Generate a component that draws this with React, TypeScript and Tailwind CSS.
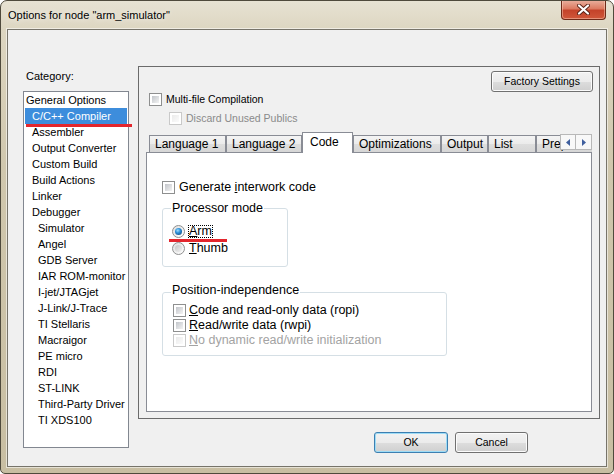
import React from "react";

function CheckBox({ disabled }: { disabled?: boolean }) {
  return (
    <span
      className={`inline-flex w-[13px] h-[13px] shrink-0 border p-[2px] bg-white ${
        disabled ? "border-[#c9c9c9]" : "border-[#8e8f8f]"
      }`}
    >
      <span
        className={`block w-full h-full ${
          disabled
            ? "bg-[linear-gradient(135deg,#ebebeb,#fbfbfb)]"
            : "bg-[linear-gradient(135deg,#c2c5ca,#f3f3f3)]"
        }`}
      />
    </span>
  );
}

function Radio({ checked }: { checked?: boolean }) {
  return (
    <span className="inline-flex items-center justify-center w-[13px] h-[13px] shrink-0 rounded-full border border-[#8e8f8f] bg-[linear-gradient(135deg,#dedede,#ffffff)]">
      {checked ? (
        <span className="w-[7px] h-[7px] rounded-full bg-[radial-gradient(circle_at_40%_35%,#9fe0ff_0%,#2b8fd8_40%,#0b3d6b_100%)]" />
      ) : (
        <span className="w-[7px] h-[7px] rounded-full bg-[linear-gradient(135deg,#c4c4c4,#f2f2f2)]" />
      )}
    </span>
  );
}

const categories: { label: string; level: number; selected?: boolean }[] = [
  { label: "General Options", level: 0 },
  { label: "C/C++ Compiler", level: 1, selected: true },
  { label: "Assembler", level: 1 },
  { label: "Output Converter", level: 1 },
  { label: "Custom Build", level: 1 },
  { label: "Build Actions", level: 1 },
  { label: "Linker", level: 1 },
  { label: "Debugger", level: 1 },
  { label: "Simulator", level: 2 },
  { label: "Angel", level: 2 },
  { label: "GDB Server", level: 2 },
  { label: "IAR ROM-monitor", level: 2 },
  { label: "I-jet/JTAGjet", level: 2 },
  { label: "J-Link/J-Trace", level: 2 },
  { label: "TI Stellaris", level: 2 },
  { label: "Macraigor", level: 2 },
  { label: "PE micro", level: 2 },
  { label: "RDI", level: 2 },
  { label: "ST-LINK", level: 2 },
  { label: "Third-Party Driver", level: 2 },
  { label: "TI XDS100", level: 2 },
];

const tabs: { label: string; w: string; selected?: boolean }[] = [
  { label: "Language 1", w: "w-[77px]" },
  { label: "Language 2", w: "w-[76px]" },
  { label: "Code", w: "w-[51px]", selected: true },
  { label: "Optimizations", w: "w-[88px]" },
  { label: "Output", w: "w-[47px]" },
  { label: "List", w: "w-[48px]" },
  { label: "Preprocessor", w: "w-[80px]" },
];

const btn =
  "h-[21px] rounded-[3px] border flex items-center justify-center text-[10.5px] text-black bg-[linear-gradient(180deg,#f2f2f2_0%,#ebebeb_50%,#dddddd_51%,#cfcfcf_100%)]";

export default function App() {
  return (
    <div className="w-[614px] h-[474px] flex flex-col rounded-t-[7px] rounded-b-[5px] border border-[#4f4a3c] overflow-hidden bg-[linear-gradient(180deg,#e7e2d3_0%,#ddd6c1_6%,#d0c7ad_35%,#c8bea2_100%)] font-['Liberation_Sans',Arial,sans-serif] text-black">
      {/* Title bar */}
      <div className="h-[28px] flex items-center justify-between pl-[7px] shrink-0">
        <span className="text-[11px] leading-[14px] [text-shadow:0_0_6px_rgba(255,255,255,0.95)]">
          Options for node "arm_simulator"
        </span>
        <div className="self-start -mt-[1px] mr-[7px] w-[45px] h-[20px] rounded-b-[4px] border border-t-0 border-[#6e2a18] bg-[linear-gradient(180deg,#eab2a0_0%,#dc7b62_45%,#c4432a_55%,#d0573a_100%)] shadow-[inset_0_0_0_1px_rgba(255,220,200,0.45)] flex items-center justify-center">
          <svg width="13" height="11" viewBox="0 0 13 11">
            <path d="M2 1.5 L11 9.5 M11 1.5 L2 9.5" stroke="#5a2417" strokeWidth="4" strokeLinecap="round" />
            <path d="M2 1.5 L11 9.5 M11 1.5 L2 9.5" stroke="#ffffff" strokeWidth="2.2" strokeLinecap="round" />
          </svg>
        </div>
      </div>

      {/* Client area */}
      <div className="ml-[6px] w-[600px] h-[438px] border border-[#77746a] bg-[#f0f0f0] flex shadow-[0_0_0_1px_rgba(255,255,255,0.55)]">
        {/* Left column */}
        <div className="w-[121px] pl-[15px] pt-[39px] flex flex-col shrink-0">
          <div className="h-[14px] leading-[14px] text-[11px] pl-[3px]">Category:</div>
          <div className="mt-[8px] w-[106px] h-[357px] border border-[#828790] bg-white relative">
            {categories.map((c) => (
              <div
                key={c.label}
                className={`h-[16px] leading-[16px] text-[11px] whitespace-nowrap ${
                  c.selected ? "mx-[1px] bg-[#3d8ddc] text-white" : ""
                } ${c.level === 0 ? "pl-[2px]" : c.level === 1 ? (c.selected ? "pl-[7px]" : "pl-[8px]") : "pl-[14px]"}`}
              >
                {c.label}
              </div>
            ))}
            <div className="absolute left-[2px] top-[32px] w-[106px] h-[3px] bg-[#e3262d]" />
          </div>
        </div>

        {/* Right column */}
        <div className="ml-[9px] w-[462px] pt-[36px] flex flex-col shrink-0">
          <div className="h-[353px] border border-[#6b6b6b] flex flex-col">
            <div
              className={`${btn} self-end mt-[4px] mr-[6px] w-[102px] border-[#707070] shadow-[inset_0_0_0_1px_#fbfbfb]`}
            >
              Factory Settings
            </div>
            <div className="mt-[1px] h-[13px] pl-[10px] flex items-center gap-[4px]">
              <CheckBox />
              <span className="text-[10.5px] leading-[13px]">Multi-file Compilation</span>
            </div>
            <div className="mt-[6px] h-[13px] pl-[30px] flex items-center gap-[4px]">
              <CheckBox disabled />
              <span className="text-[10.5px] leading-[13px] text-[#8a8a8a]">Discard Unused Publics</span>
            </div>

            {/* Tab strip */}
            <div className="mt-[7px] ml-[10px] w-[443px] h-[21px] flex items-end relative z-10 overflow-hidden">
              {tabs.map((t) =>
                t.selected ? (
                  <div
                    key={t.label}
                    className={`${t.w} h-[21px] shrink-0 border border-b-0 border-[#898c95] bg-white text-[12px] leading-[18px] pl-[7px] whitespace-nowrap`}
                  >
                    {t.label}
                  </div>
                ) : (
                  <div
                    key={t.label}
                    className={`${t.w} h-[17px] mb-[1px] shrink-0 border border-b-0 border-[#898c95] bg-[linear-gradient(180deg,#f4f4f4_0%,#ebebeb_50%,#dedede_51%,#d6d6d6_100%)] text-[12px] leading-[16px] pl-[5px] whitespace-nowrap overflow-hidden`}
                  >
                    {t.label}
                  </div>
                )
              )}
              <div className="absolute right-0 top-[2px] flex">
                <div className="w-[16px] h-[16px] border border-[#b8b8b8] bg-[#f8f8f8] flex items-center justify-center">
                  <svg width="4" height="7" viewBox="0 0 4 7">
                    <path d="M4 0 L0 3.5 L4 7 Z" fill="#3f5f9e" />
                  </svg>
                </div>
                <div className="w-[16px] h-[16px] border border-l-0 border-[#b8b8b8] bg-[#f8f8f8] flex items-center justify-center">
                  <svg width="4" height="7" viewBox="0 0 4 7">
                    <path d="M0 0 L4 3.5 L0 7 Z" fill="#3f5f9e" />
                  </svg>
                </div>
              </div>
            </div>

            {/* Tab panel */}
            <div className="-mt-[1px] ml-[7px] w-[446px] h-[260px] border border-[#898c95] bg-white flex flex-col text-[12.5px]">
              <div className="mt-[28px] ml-[15px] h-[13px] flex items-center gap-[4px]">
                <CheckBox />
                <span className="leading-[13px]">
                  Generate <u>i</u>nterwork code
                </span>
              </div>

              <div className="mt-[14px] ml-[15px] w-[126px] h-[59px] relative border border-[#d5dfe5] rounded-[3px] pt-[16px] pl-[9px] flex flex-col gap-[4px]">
                <span className="absolute left-[8px] -top-[8px] bg-white px-[1px] leading-[14px]">
                  Processor mode
                </span>
                <div className="h-[13px] flex items-center gap-[3px]">
                  <Radio checked />
                  <span className="inline-block leading-[11px] border border-dotted border-black">
                    <u>A</u>rm
                  </span>
                </div>
                <div className="h-[13px] flex items-center gap-[4px]">
                  <Radio />
                  <span className="leading-[13px]">
                    <u>T</u>humb
                  </span>
                </div>
                <div className="absolute left-[6px] top-[30px] w-[58px] h-[3px] bg-[#e3262d]" />
              </div>

              <div className="mt-[25px] ml-[15px] w-[285px] h-[64px] relative border border-[#d5dfe5] rounded-[3px] pt-[11px] pl-[10px] flex flex-col gap-[2px]">
                <span className="absolute left-[8px] -top-[10px] bg-white px-[1px] leading-[14px]">
                  Position-independence
                </span>
                <div className="h-[13px] flex items-center gap-[3px]">
                  <CheckBox />
                  <span className="leading-[13px]">
                    <u>C</u>ode and read-only data (ropi)
                  </span>
                </div>
                <div className="h-[13px] flex items-center gap-[3px]">
                  <CheckBox />
                  <span className="leading-[13px]">
                    <u>R</u>ead/write data (rwpi)
                  </span>
                </div>
                <div className="h-[13px] flex items-center gap-[3px]">
                  <CheckBox disabled />
                  <span className="leading-[13px] text-[#a3a3a3]">
                    <u>N</u>o dynamic read/write initialization
                  </span>
                </div>
              </div>
            </div>
          </div>

          {/* Buttons */}
          <div className="mt-[13px] flex justify-end gap-[7px] pr-[72px]">
            <div className={`${btn} w-[74px] border-[#3c7fb1] shadow-[inset_0_0_0_1px_#9edcf6]`}>OK</div>
            <div className={`${btn} w-[73px] border-[#707070] shadow-[inset_0_0_0_1px_#fbfbfb]`}>Cancel</div>
          </div>
        </div>
      </div>
    </div>
  );
}
